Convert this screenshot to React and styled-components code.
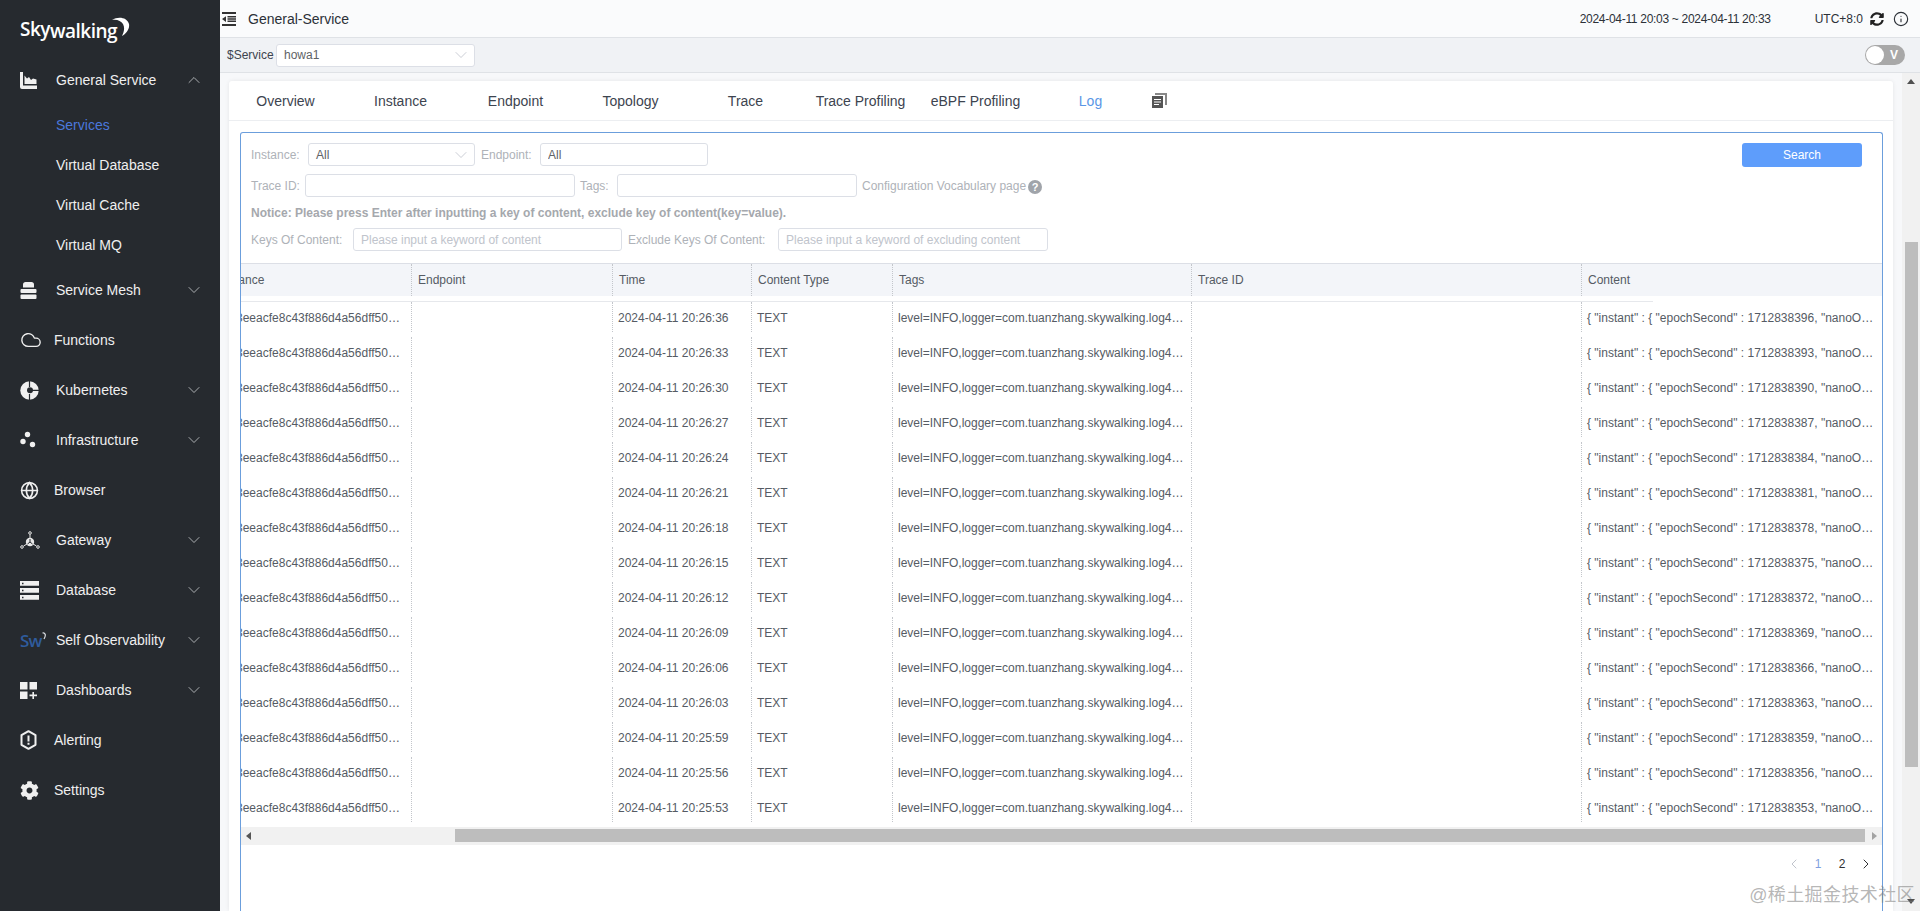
import React from "react";
import styled, { createGlobalStyle } from "styled-components";
import { FaCog, FaSyncAlt } from "react-icons/fa";
import { Cloud, Globe, Info, ChevronDown, ChevronUp, ChevronLeft, ChevronRight } from "lucide-react";

const GlobalStyle = createGlobalStyle`
    html, body {
        margin: 0;
        padding: 0;
        height: 100%;
        overflow: hidden;
    }
    body {
        font-family: "Liberation Sans", Arial, sans-serif;
        font-size: 12px;
        color: #3d444f;
    }
    * {
        box-sizing: border-box;
    }
`;

const Page = styled.div`
    display: flex;
    height: 911px;
    overflow: hidden;
    position: relative;
`;

const Sidebar = styled.aside`
    width: 220px;
    flex: none;
    background: #262a2f;
    color: #efefef;
`;

const LogoRow = styled.div`
    height: 55px;
    padding: 16px 0 0 20px;
    display: flex;
    align-items: flex-start;
`;

const LogoText = styled.span`
    font-family: "Open Sans", sans-serif;
    font-weight: 600;
    font-size: 19px;
    line-height: 26px;
    letter-spacing: -0.5px;
    color: #fff;
`;

const LogoTail = styled.span`
    position: relative;
    top: 2px;
`;

const LogoMoon = styled.svg`
    width: 18px;
    height: 20px;
    margin: 1px 0 0 -5px;
    fill: #fff;
`;

const MenuRow = styled.div`
    height: 50px;
    display: flex;
    align-items: center;
    font-size: 14px;
    padding-left: 20px;
`;

const MenuIcon = styled.span`
    width: ${(p) => (p.$flat ? "34px" : "36px")};
    flex: none;
    display: flex;
    align-items: center;
`;

const MenuLabel = styled.span`
    flex: 1;
`;

const MenuArrow = styled.span`
    width: 36px;
    flex: none;
    color: #c4c6c9;
    display: flex;
`;

const SubRow = styled.div`
    height: 40px;
    line-height: 40px;
    font-size: 14px;
    padding-left: 56px;
    color: ${(p) => (p.$active ? "#4b78dc" : "#efefef")};
`;

const SwMark = styled.span`
    font-family: "Open Sans", sans-serif;
    font-weight: 600;
    font-size: 17px;
    letter-spacing: -0.8px;
    color: #2f5c9e;
    display: flex;
    align-items: flex-start;
    svg {
        margin-top: 3px;
    }
`;

const Main = styled.div`
    flex: 1;
    min-width: 0;
    display: flex;
    flex-direction: column;
    background: #f7f8fa;
`;

const TopBar = styled.header`
    height: 38px;
    flex: none;
    background: #fafbfc;
    border-bottom: 1px solid #dfe2e6;
    display: flex;
    align-items: center;
    padding: 0 11px 0 2px;
    font-size: 12px;
    color: #2c3138;
`;

const PageName = styled.span`
    font-size: 14px;
    margin-left: 12px;
    flex: 1;
`;

const TimeRange = styled.span`
    margin-right: 44px;
    letter-spacing: -0.3px;
`;

const TimeZone = styled.span`
    margin-right: 7px;
`;

const RefreshBtn = styled(FaSyncAlt)`
    width: 14px;
    height: 14px;
    margin-right: 9px;
    color: #222;
`;

const ServiceBar = styled.div`
    height: 35px;
    flex: none;
    background: #f0f2f5;
    border-bottom: 1px solid #dfe2e6;
    display: flex;
    align-items: center;
    padding: 0 15px 0 7px;
    color: #3d444f;
`;

const ServiceName = styled.span`
    width: 49px;
`;

const SelectBox = styled.div`
    width: ${(p) => p.$w}px;
    height: 23px;
    flex: none;
    background: #fff;
    border: 1px solid #dcdfe6;
    border-radius: 3px;
    display: flex;
    align-items: center;
    justify-content: space-between;
    padding: 0 3px 0 7px;
    color: #606266;
    svg {
        color: #c0c4cc;
    }
`;

const Toggle = styled.div`
    margin-left: auto;
    width: 40px;
    height: 20px;
    border-radius: 10px;
    background: #a8a8a8;
    color: #fff;
    font-weight: bold;
    font-size: 12px;
    line-height: 19px;
    display: flex;
    align-items: center;
    padding-left: 1px;
    span {
        margin-left: 6px;
    }
`;

const ToggleKnob = styled.div`
    width: 18px;
    height: 18px;
    background: #fff;
    border-radius: 50%;
`;

const ContentArea = styled.div`
    flex: 1;
    min-height: 0;
    display: flex;
`;

const CardColumn = styled.div`
    flex: 1;
    min-width: 0;
    padding: 8px 9px 0 9px;
    overflow: hidden;
`;

const Card = styled.div`
    background: #fff;
    height: 100%;
    border-radius: 3px 3px 0 0;
    box-shadow: 0 0 4px rgba(0, 0, 0, 0.08);
    display: flex;
    flex-direction: column;
`;

const Tabs = styled.nav`
    height: 40px;
    flex: none;
    display: flex;
    align-items: center;
    border-bottom: 1px solid #eceef1;
    font-size: 14px;
    padding-left: 0;
    margin-left: -1px;
`;

const Tab = styled.div`
    width: 115px;
    text-align: center;
    color: ${(p) => (p.$active ? "#5a96e6" : "#3d444f")};
`;

const TabIcon = styled.svg`
    width: 15px;
    height: 15px;
    margin-left: 4px;
`;

const Panel = styled.section`
    flex: 1;
    min-height: 0;
    margin: 11px 10px 0 11px;
    border: 1px solid #6b9edc;
    border-bottom: none;
    border-radius: 3px 3px 0 0;
    overflow: hidden;
`;

const FilterRow = styled.div`
    display: flex;
    align-items: center;
    height: 23px;
    margin: ${(p) => p.$margin || "0"};
    padding-left: 10px;
    color: #aeb2b8;
`;

const FieldLabel = styled.label`
    width: ${(p) => p.$w}px;
    margin-left: ${(p) => p.$ml || 0}px;
    flex: none;
    white-space: nowrap;
`;

const TextField = styled.input`
    width: ${(p) => p.$w}px;
    height: 23px;
    flex: none;
    border: 1px solid #dcdfe6;
    border-radius: 3px;
    padding: 0 7px;
    font: inherit;
    color: #606266;
    outline: none;
    &::placeholder {
        color: #c0c4cc;
    }
`;

const HelpMark = styled.span`
    width: 14px;
    height: 14px;
    margin: 2px 0 0 3px;
    border-radius: 50%;
    background: #a0a4aa;
    color: #fff;
    font-size: 11px;
    font-weight: bold;
    line-height: 14px;
    text-align: center;
`;

const SearchButton = styled.button`
    width: 120px;
    height: 24px;
    margin-left: auto;
    margin-right: 20px;
    border: none;
    border-radius: 3px;
    background: #5e9dfb;
    color: #fff;
    font: inherit;
`;

const Notice = styled.div`
    height: 16px;
    line-height: 16px;
    margin-top: 8px;
    padding-left: 10px;
    font-weight: bold;
    color: #a5a8ad;
`;

const TableClip = styled.div`
    margin-top: 12px;
    overflow: hidden;
`;

const TableInner = styled.div`
    margin-left: -25px;
    width: 1700px;
`;

const HeadRow = styled.div`
    display: flex;
    height: 33px;
    background: #f3f5f9;
    border-top: 1px solid #dcdfe6;
    color: #555b64;
`;

const HeadLine = styled.div`
    width: 1437px;
    margin-top: 5px;
    border-bottom: 1px solid #e6e8ec;
`;

const BodyRow = styled.div`
    display: flex;
    height: 35px;
`;

const Cell = styled.div`
    width: ${(p) => p.$w}px;
    flex: none;
    height: ${(p) => (p.$head ? "32px" : "30px")};
    line-height: ${(p) => (p.$head ? "32px" : "33px")};
    padding: ${(p) => {
        if (p.$first) return p.$head ? "0 9px 0 2px" : "0 7px 0 9px";
        return p.$head ? "0 7px 0 6px" : "0 7px 0 5px";
    }};
    border-left: 1px dotted ${(p) => (p.$first ? "transparent" : "#c3c6cb")};
    color: #555b64;
    white-space: nowrap;
    overflow: hidden;
    text-overflow: ellipsis;
`;

const HScroll = styled.div`
    height: 18px;
    background: #f1f1f1;
    display: flex;
    align-items: center;
    justify-content: space-between;
    position: relative;
    padding: 0 5px;
`;

const HThumb = styled.div`
    position: absolute;
    left: 214px;
    right: 17px;
    top: 2px;
    height: 13px;
    background: #bdbdbd;
`;

const ArrowLeft = styled.div`
    border-style: solid;
    border-width: 4px 5px 4px 0;
    border-color: transparent #555 transparent transparent;
`;

const ArrowRight = styled.div`
    border-style: solid;
    border-width: 4px 0 4px 5px;
    border-color: transparent transparent transparent #a3a3a3;
`;

const Pager = styled.div`
    display: flex;
    justify-content: flex-end;
    align-items: center;
    height: 38px;
    padding-right: 4px;
    font-size: 12px;
`;

const PageItem = styled.span`
    width: 24px;
    display: flex;
    justify-content: center;
    color: ${(p) => p.$color || "#303133"};
`;

const VScroll = styled.div`
    width: 18px;
    flex: none;
    background: #f1f1f1;
    display: flex;
    flex-direction: column;
    align-items: center;
    justify-content: space-between;
    padding: 6px 0 7px 0;
    position: relative;
`;

const ArrowUp = styled.div`
    border-style: solid;
    border-width: 0 4px 5px 4px;
    border-color: transparent transparent #505050 transparent;
`;

const ArrowDown = styled.div`
    border-style: solid;
    border-width: 5px 4px 0 4px;
    border-color: #505050 transparent transparent transparent;
`;

const VThumb = styled.div`
    position: absolute;
    left: 3px;
    width: 13px;
    top: 169px;
    height: 525px;
    background: #bdbdbd;
`;

const Watermark = styled.div`
    position: absolute;
    right: 5px;
    bottom: 5px;
    font-family: "Liberation Sans", "Noto Sans CJK SC", sans-serif;
    font-size: 18px;
    letter-spacing: 0.4px;
    color: rgba(120, 120, 120, 0.55);
`;

const ChartIcon = () => (
    <svg width="17" height="17" viewBox="0 0 17 17" fill="#f0f0f0">
        <path d="M0 0h3v13.5h14V17H2a2 2 0 0 1-2-2z" />
        <path d="M4.5 12V3.5l2.5 3 2-1.5 2 3 2-1.5 3.5 1V12z" />
    </svg>
);

const MeshIcon = () => (
    <svg width="17" height="17" viewBox="0 0 17 17" fill="#f0f0f0">
        <path d="M3 5.5V2.5C3 1 4 0 5.5 0h6C13 0 14 1 14 2.5v3z" />
        <rect x="0.5" y="7" width="16" height="4" rx="1" />
        <rect x="0.5" y="12.5" width="16" height="4.5" rx="1" />
    </svg>
);

const KubeIcon = () => (
    <svg width="19" height="19" viewBox="0 0 19 19">
        <circle cx="9.5" cy="9.5" r="9.2" fill="#f0f0f0" />
        <path d="M9.500 0v6M9.500 13v6M12 9.300h7" stroke="#262a2f" strokeWidth="1.200" />
        <circle cx="10" cy="9.300" r="3" fill="#262a2f" />
    </svg>
);

const InfraIcon = () => (
    <svg width="16" height="18" viewBox="0 0 16 18" fill="#f0f0f0">
        <circle cx="7.5" cy="3.5" r="2.7" />
        <circle cx="3" cy="10.5" r="2.7" />
        <circle cx="12.5" cy="13.5" r="2.7" />
    </svg>
);

const GatewayIcon = () => (
    <svg width="20" height="19" viewBox="0 0 20 19" fill="none" stroke="#e8e8e8" strokeWidth="1">
        <circle cx="10" cy="2" r="1.3" />
        <path d="M10 3.5V7M7 13l-3.5 2M13 13l3.5 2" />
        <circle cx="2" cy="16" r="1.3" />
        <circle cx="18" cy="16" r="1.3" />
        <circle cx="10" cy="11" r="4.2" fill="#e8e8e8" stroke="none" />
        <path d="M10 8v3M7.5 13l2.5-2 2.5 2" stroke="#262a2f" />
    </svg>
);

const DatabaseIcon = () => (
    <svg width="19" height="19" viewBox="0 0 19 19" fill="#f0f0f0">
        <path d="M0 0h19v4.8H0zM0 7h19v4.8H0zM0 14h19v4.8H0z" />
        <path d="M2 1.8h1.5v1.4H2zM2 8.8h1.5v1.4H2zM2 15.8h1.5v1.4H2z" fill="#262a2f" />
    </svg>
);

const DashIcon = () => (
    <svg width="17" height="17" viewBox="0 0 17 17" fill="#f0f0f0">
        <path d="M0 0h7.5v7.5H0zM9.500 0H17v7.5H9.500zM0 9.500h7.5V17H0z" />
        <path d="M12.400 10h1.600v2.600h3v1.600h-3V17h-1.600v-2.800H9.500v-1.600h2.900z" />
    </svg>
);

const AlertIcon = () => (
    <svg width="17" height="20" viewBox="0 0 17 20">
        <path d="M8.500 1.200l7 4v9.600l-7 4-7-4V5.200z" fill="none" stroke="#f0f0f0" strokeWidth="2" strokeLinejoin="round" />
        <path d="M7.500 5.500h2v6h-2zM7.500 12.800h2v2h-2z" fill="#f0f0f0" />
    </svg>
);

const CollapseIcon = () => (
    <svg width="14" height="14" viewBox="0 0 14 14" fill="#333">
        <path d="M0 0h14v2H0zM5.500 4H14v1.500H5.500zM5.500 6.300H14v1.500H5.500zM5.500 8.600H14v1.500H5.500zM0 12h14v2H0zM4 4.200v5.700L0 7z" />
    </svg>
);

const menuTop = [
    { label: "General Service", icon: <ChartIcon />, open: true },
];

const menuRest = [
    { label: "Service Mesh", icon: <MeshIcon />, arrow: true },
    { label: "Functions", icon: <Cloud size={22} strokeWidth={1.5} />, flat: true },
    { label: "Kubernetes", icon: <KubeIcon />, arrow: true },
    { label: "Infrastructure", icon: <InfraIcon />, arrow: true },
    { label: "Browser", icon: <Globe size={19} strokeWidth={2} />, flat: true },
    { label: "Gateway", icon: <GatewayIcon />, arrow: true },
    { label: "Database", icon: <DatabaseIcon />, arrow: true },
    {
        label: "Self Observability",
        icon: (
            <SwMark>
                Sw
                <svg width="5" height="8" viewBox="0 0 5 8" fill="none" stroke="#dfe3e8" strokeWidth="1.200">
                    <path d="M0.500 1C3 0.500 4.500 3 2 7" />
                </svg>
            </SwMark>
        ),
        arrow: true,
    },
    { label: "Dashboards", icon: <DashIcon />, arrow: true },
    { label: "Alerting", icon: <AlertIcon />, flat: true },
    { label: "Settings", icon: <FaCog size={19} />, flat: true },
];

const subItems = ["Services", "Virtual Database", "Virtual Cache", "Virtual MQ"];

const tabNames = ["Overview", "Instance", "Endpoint", "Topology", "Trace", "Trace Profiling", "eBPF Profiling", "Log"];

const cols = [
    { name: "Instance", w: 195 },
    { name: "Endpoint", w: 201 },
    { name: "Time", w: 139 },
    { name: "Content Type", w: 141 },
    { name: "Tags", w: 299 },
    { name: "Trace ID", w: 390 },
    { name: "Content", w: 301 },
];

const logs = [
    ["20:26:36", 396], ["20:26:33", 393], ["20:26:30", 390], ["20:26:27", 387], ["20:26:24", 384],
    ["20:26:21", 381], ["20:26:18", 378], ["20:26:15", 375], ["20:26:12", 372], ["20:26:09", 369],
    ["20:26:06", 366], ["20:26:03", 363], ["20:25:59", 359], ["20:25:56", 356], ["20:25:53", 353],
];

const MenuItem = ({ item }) => (
    <MenuRow>
        <MenuIcon $flat={item.flat}>{item.icon}</MenuIcon>
        <MenuLabel>{item.label}</MenuLabel>
        {item.arrow && <MenuArrow><ChevronDown size={20} strokeWidth={1} /></MenuArrow>}
        {item.open && <MenuArrow><ChevronUp size={20} strokeWidth={1} /></MenuArrow>}
    </MenuRow>
);

const App = () => {
    return (
        <Page>
            <GlobalStyle />
            <Sidebar>
                <LogoRow>
                    <LogoText>Sky<LogoTail>walking</LogoTail></LogoText>
                    <LogoMoon viewBox="0 0 18 20">
                        <path d="M0 3C6-1 15 0 17 7 18 12 14 17 10 19 12 15 13 11 11 7 9 4 5 2 0 3z" />
                    </LogoMoon>
                </LogoRow>
                {menuTop.map((item) => <MenuItem key={item.label} item={item} />)}
                {subItems.map((name, i) => <SubRow key={name} $active={i === 0}>{name}</SubRow>)}
                {menuRest.map((item) => <MenuItem key={item.label} item={item} />)}
            </Sidebar>
            <Main>
                <TopBar>
                    <CollapseIcon />
                    <PageName>General-Service</PageName>
                    <TimeRange>2024-04-11 20:03 ~ 2024-04-11 20:33</TimeRange>
                    <TimeZone>UTC+8:0</TimeZone>
                    <RefreshBtn />
                    <Info size={16} strokeWidth={1.7} />
                </TopBar>
                <ServiceBar>
                    <ServiceName>$Service</ServiceName>
                    <SelectBox $w={199}>
                        howa1
                        <ChevronDown size={20} strokeWidth={1} />
                    </SelectBox>
                    <Toggle>
                        <ToggleKnob />
                        <span>V</span>
                    </Toggle>
                </ServiceBar>
                <ContentArea>
                    <CardColumn>
                        <Card>
                            <Tabs>
                                {tabNames.map((name) => <Tab key={name} $active={name === "Log"}>{name}</Tab>)}
                                <TabIcon viewBox="0 0 15 15" fill="#555">
                                    <path d="M3 0h12v12h-2V2H3z" fill="#888" />
                                    <path d="M0 3h11v12H0z" />
                                    <path d="M2 6h7v1H2zM2 8.500h7v1H2zM2 11h5v1H2z" fill="#fff" />
                                </TabIcon>
                            </Tabs>
                            <Panel>
                                <FilterRow $margin="10px 0 0 0">
                                    <FieldLabel $w={57}>Instance:</FieldLabel>
                                    <SelectBox $w={167}>
                                        All
                                        <ChevronDown size={20} strokeWidth={1} />
                                    </SelectBox>
                                    <FieldLabel $w={59} $ml={6}>Endpoint:</FieldLabel>
                                    <TextField $w={168} defaultValue="All" />
                                    <SearchButton>Search</SearchButton>
                                </FilterRow>
                                <FilterRow $margin="8px 0 0 0">
                                    <FieldLabel $w={54}>Trace ID:</FieldLabel>
                                    <TextField $w={270} />
                                    <FieldLabel $w={37} $ml={5}>Tags:</FieldLabel>
                                    <TextField $w={240} />
                                    <FieldLabel $w={163} $ml={5}>Configuration Vocabulary page</FieldLabel>
                                    <HelpMark>?</HelpMark>
                                </FilterRow>
                                <Notice>Notice: Please press Enter after inputting a key of content, exclude key of content(key=value).</Notice>
                                <FilterRow $margin="7px 0 0 0">
                                    <FieldLabel $w={102}>Keys Of Content:</FieldLabel>
                                    <TextField $w={269} placeholder="Please input a keyword of content" />
                                    <FieldLabel $w={150} $ml={6}>Exclude Keys Of Content:</FieldLabel>
                                    <TextField $w={270} placeholder="Please input a keyword of excluding content" />
                                </FilterRow>
                                <TableClip>
                                    <TableInner>
                                        <HeadRow>
                                            {cols.map((c, i) => <Cell key={c.name} $head $w={c.w} $first={i === 0}>{c.name}</Cell>)}
                                        </HeadRow>
                                        <HeadLine />
                                        {logs.map(([time, sec]) => (
                                            <BodyRow key={time}>
                                                <Cell $first $w={cols[0].w}>fd3eeacfe8c43f886d4a56dff50a7c21d6b9</Cell>
                                                <Cell $w={cols[1].w} />
                                                <Cell $w={cols[2].w}>2024-04-11 {time}</Cell>
                                                <Cell $w={cols[3].w}>TEXT</Cell>
                                                <Cell $w={cols[4].w}>level=INFO,logger=com.tuanzhang.skywalking.log4j2.Log4jController</Cell>
                                                <Cell $w={cols[5].w} />
                                                <Cell $w={cols[6].w}>{`{ "instant" : { "epochSecond" : 1712838${sec}, "nanoOfSecond" : 0 } }`}</Cell>
                                            </BodyRow>
                                        ))}
                                    </TableInner>
                                </TableClip>
                                <HScroll>
                                    <ArrowLeft />
                                    <HThumb />
                                    <ArrowRight />
                                </HScroll>
                                <Pager>
                                    <PageItem $color="#c0c4cc"><ChevronLeft size={16} strokeWidth={1.5} /></PageItem>
                                    <PageItem $color="#7f9fe0">1</PageItem>
                                    <PageItem>2</PageItem>
                                    <PageItem><ChevronRight size={16} strokeWidth={1.5} /></PageItem>
                                </Pager>
                            </Panel>
                        </Card>
                    </CardColumn>
                    <VScroll>
                        <ArrowUp />
                        <VThumb />
                        <ArrowDown />
                    </VScroll>
                </ContentArea>
            </Main>
            <Watermark>@稀土掘金技术社区</Watermark>
        </Page>
    );
};

export default App;
